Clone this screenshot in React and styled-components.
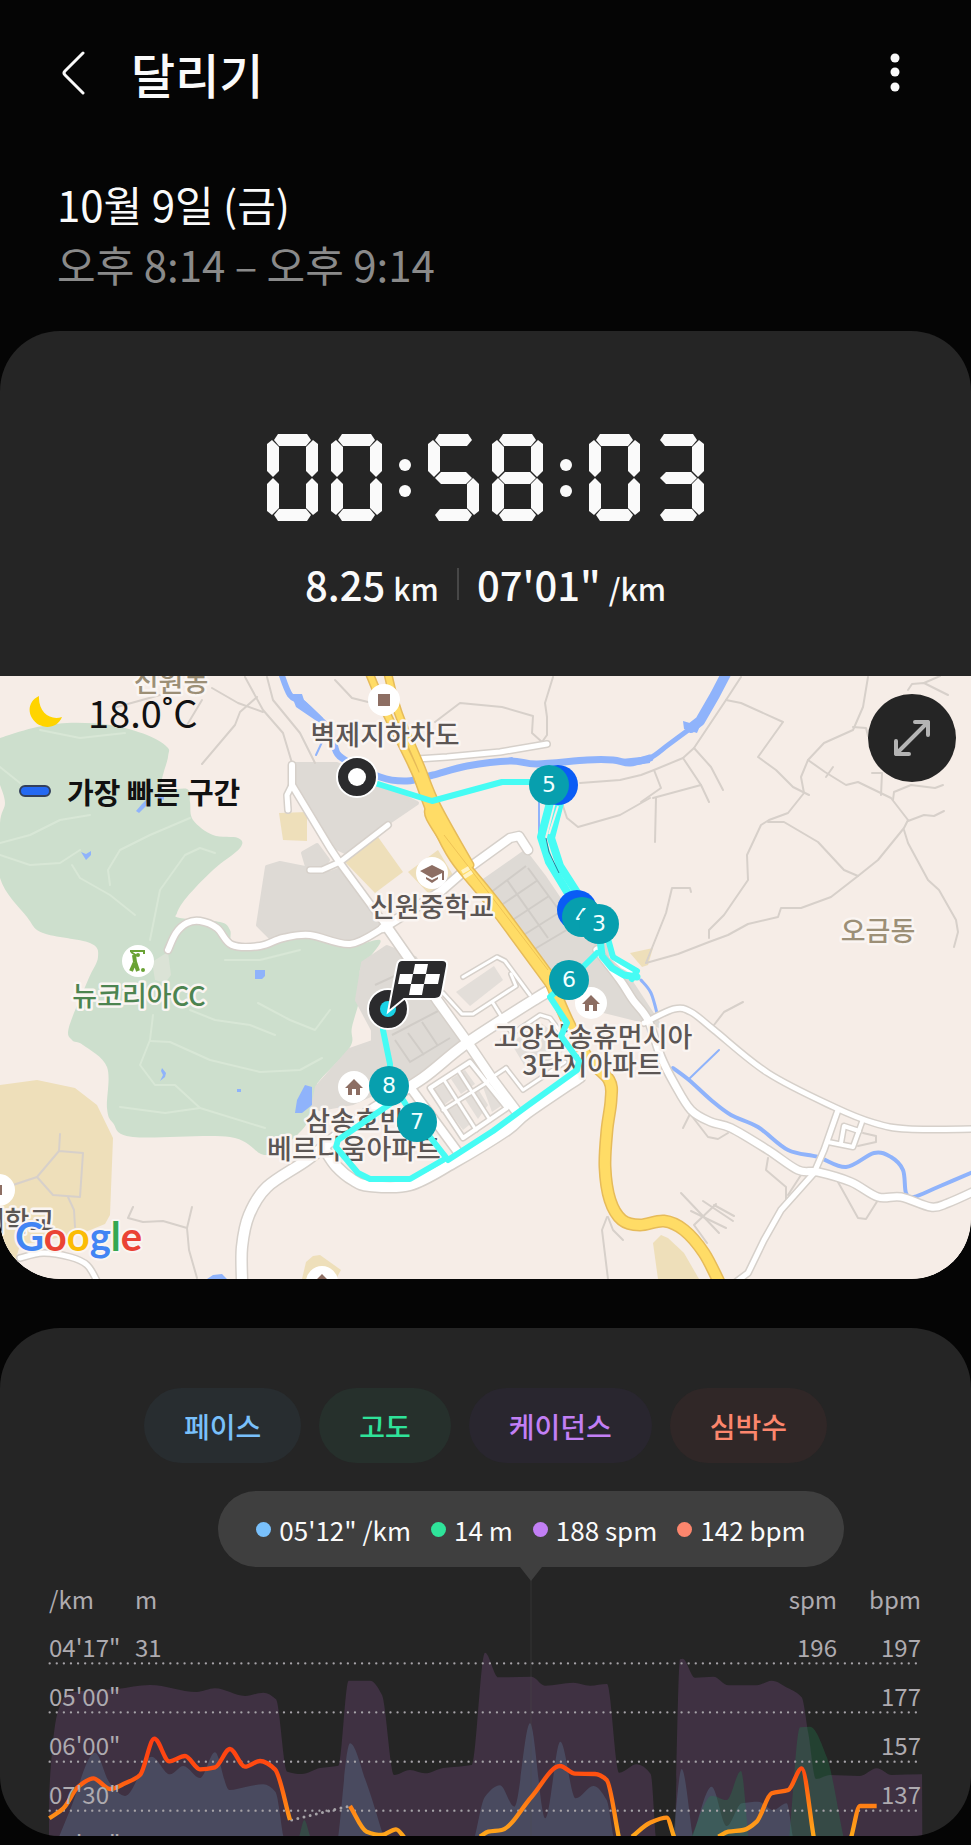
import React from 'react';
import styled, { createGlobalStyle } from 'styled-components';

const GlobalStyle = createGlobalStyle`
  body {
    margin: 0;
    background: #050505;
    color: #fafafa;
    font-family: 'Noto Sans CJK KR', 'Noto Sans', sans-serif;
  }

  button {
    border: 0;
    padding: 0;
    background: none;
    color: inherit;
    font: inherit;
    cursor: pointer;
  }
`;

const Page = styled.main`
  padding-bottom: 9px;
`;

const Header = styled.header`
  display: flex;
  align-items: center;
  height: 146px;
  padding: 0 52px 0 57px;
`;

const IconButton = styled.button`
  display: flex;
  align-items: center;
  justify-content: center;
  width: 48px;
  height: 48px;
`;

const BackButton = styled(IconButton)`
  width: 32px;
`;

const Title = styled.h1`
  flex: 1;
  margin: 0 0 0 42px;
  font-size: 48px;
  line-height: 60px;
  font-weight: 500;
`;

const DateBlock = styled.section`
  padding: 28px 57px 37px;
  font-size: 42px;
  line-height: 60px;
`;

const TimeRange = styled.div`
  color: #8a8a8a;
`;

const SummaryCard = styled.section`
  overflow: hidden;
  border-radius: 60px;
  background: #252525;
`;

const Summary = styled.div`
  display: flex;
  flex-direction: column;
  align-items: center;
  padding: 103px 24px 62px;
`;

const Timer = styled.div`
  display: flex;
  gap: 13px;
`;

const Digit = styled.span`
  display: grid;
  grid-template-columns: 6px 6px 27px 6px 6px;
  grid-template-rows: 6px 6px 26px 5px 1px 6px 25px 6px 6px;
`;

const Segment = styled.span`
  grid-area: ${props => props.$area};
  background: #fafafa;
  clip-path: polygon(${props => props.$shape});
`;

const Colon = styled.span`
  display: flex;
  flex-direction: column;
  justify-content: center;
  gap: 14px;
  margin: 0 4px;
`;

const ColonDot = styled.span`
  width: 12px;
  height: 12px;
  border-radius: 50%;
  background: #fafafa;
`;

const Stats = styled.div`
  display: flex;
  align-items: center;
  gap: 18px;
  margin-top: 33px;
  font-size: 40px;
  line-height: 60px;
  font-weight: 500;
`;

const Unit = styled.span`
  margin-left: 8px;
  font-size: 30px;
  line-height: 30px;
`;

const Divider = styled.span`
  width: 2px;
  height: 32px;
  background: #474747;
`;

const MapBox = styled.div`
  position: relative;
  overflow: hidden;
  border-radius: 0 0 60px 60px;
  background: #f6ede7;
`;

const MapSvg = styled.svg`
  display: block;
  width: 100%;
  height: auto;
`;

const MapInfo = styled.div`
  position: absolute;
  top: 8px;
  left: 19px;
  color: #111;
`;

const Weather = styled.div`
  display: flex;
  align-items: center;
  gap: 25px;
  padding-left: 8px;
  font-size: 38px;
  line-height: 56px;
`;

const Legend = styled.div`
  display: flex;
  align-items: center;
  gap: 16px;
  margin-top: 29px;
  font-size: 29px;
  line-height: 44px;
  font-weight: 700;
`;

const LegendBar = styled.span`
  box-sizing: border-box;
  width: 32px;
  height: 12px;
  border: 2px solid #33405c;
  border-radius: 6px;
  background: #2469f2;
`;

const ExpandButton = styled(IconButton)`
  position: absolute;
  top: 18px;
  right: 15px;
  width: 88px;
  height: 88px;
  border-radius: 50%;
  background: #252525;
`;

const ChartCard = styled.section`
  overflow: hidden;
  margin-top: 49px;
  padding-top: 60px;
  border-radius: 60px;
  background: #252525;
`;

const Chips = styled.div`
  display: flex;
  justify-content: center;
  gap: 18px;
`;

const Chip = styled.button`
  && {
    height: 75px;
    padding: 0 40px;
    border-radius: 38px;
    background: ${props => props.$bg};
    color: ${props => props.$color};
    font-size: 28px;
    font-weight: 500;
    white-space: nowrap;
  }
`;

const TooltipRow = styled.div`
  display: flex;
  justify-content: center;
  padding: 28px 0 0 91px;
`;

const Tooltip = styled.div`
  display: flex;
  align-items: center;
  gap: 20px;
  height: 76px;
  padding: 0 38px;
  border-radius: 38px;
  background: #3f3f3f;
  font-size: 26px;
  white-space: nowrap;
`;

const Reading = styled.span`
  display: flex;
  align-items: center;
  gap: 8px;

  &::before {
    content: '';
    width: 15px;
    height: 15px;
    border-radius: 50%;
    background: ${props => props.$color};
  }
`;

const ChartArea = styled.div`
  display: grid;
  height: 269px;
  overflow: hidden;
`;

const ChartSvg = styled.svg`
  grid-area: 1 / 1;
  display: block;
  width: 100%;
  height: 269px;
`;

const Axes = styled.div`
  grid-area: 1 / 1;
  padding: 8px 50px 0 49px;
  color: #aeabb0;
  font-size: 24px;
`;

const AxisRow = styled.div`
  display: grid;
  grid-template-columns: 86px 1fr 1fr 84px;
  height: 49px;
  line-height: 49px;

  &:first-child {
    height: 47px;
    line-height: 47px;
  }
`;

const AxisText = styled.span`
  text-align: ${props => (props.$end ? 'right' : 'left')};
`;

/* ---------- seven segment timer ---------- */

const SEGMENTS = {
  a: { area: '1 / 2 / 3 / 5', shape: '1px 6px, 5px 0, 34px 0, 38px 6px, 33px 12px, 6px 12px' },
  b: { area: '2 / 4 / 5 / 6', shape: '7px 0, 12px 4px, 12px 31px, 6px 37px, 0 31px, 0 7px' },
  c: { area: '6 / 4 / 9 / 6', shape: '6px 0, 12px 6px, 12px 33px, 7px 37px, 0 30px, 0 6px' },
  d: { area: '8 / 2 / 10 / 5', shape: '6px 0, 33px 0, 38px 6px, 34px 12px, 5px 12px, 1px 6px' },
  e: { area: '6 / 1 / 9 / 3', shape: '6px 0, 12px 6px, 12px 30px, 5px 37px, 0 33px, 0 6px' },
  f: { area: '2 / 1 / 5 / 3', shape: '5px 0, 12px 7px, 12px 31px, 6px 37px, 0 31px, 0 4px' },
  g: { area: '4 / 2 / 7 / 5', shape: '1px 6px, 7px 0, 32px 0, 38px 6px, 32px 12px, 7px 12px' },
};

const LIT = {
  0: 'abcdef',
  1: 'bc',
  2: 'abdeg',
  3: 'abcdg',
  4: 'bcfg',
  5: 'acdfg',
  6: 'acdefg',
  7: 'abc',
  8: 'abcdefg',
  9: 'abcdfg',
};

const SegmentTimer = ({ value }) => (
  <Timer role='timer' aria-label={value}>
    {value.split('').map((char, i) => (
      char === ':' ? (
        <Colon key={i}>
          <ColonDot />
          <ColonDot />
        </Colon>
      ) : (
        <Digit key={i}>
          {LIT[char].split('').map(name => (
            <Segment key={name} $area={SEGMENTS[name].area} $shape={SEGMENTS[name].shape} />
          ))}
        </Digit>
      )
    ))}
  </Timer>
);

/* ---------- path helpers ---------- */

const parse = (str) => str.split(' ').map(pair => pair.split(',').map(Number));

// rounded line through every point
const curve = (str) => {
  const p = parse(str);
  let d = `M${p[0]}`;
  for (let i = 0; i < p.length - 1; i++) {
    const a = p[i - 1] || p[i];
    const b = p[i];
    const c = p[i + 1];
    const e = p[i + 2] || c;
    d += `C${b[0] + (c[0] - a[0]) / 6},${b[1] + (c[1] - a[1]) / 6} ${c[0] - (e[0] - b[0]) / 6},${c[1] - (e[1] - b[1]) / 6} ${c[0]},${c[1]}`;
  }
  return d;
};

// never rises above or falls below its own points
const monotone = (str) => {
  const p = parse(str);
  const slope = p.slice(1).map((q, i) => (q[1] - p[i][1]) / (q[0] - p[i][0] || 1));
  const tangent = p.map((q, i) => {
    if (i === 0) return slope[0];
    if (i === p.length - 1) return slope[i - 1];
    if (slope[i - 1] * slope[i] <= 0) return 0;
    return 2 * slope[i - 1] * slope[i] / (slope[i - 1] + slope[i]);
  });
  let d = `M${p[0]}`;
  for (let i = 0; i < p.length - 1; i++) {
    const h = (p[i + 1][0] - p[i][0]) / 3;
    d += `C${p[i][0] + h},${p[i][1] + tangent[i] * h} ${p[i + 1][0] - h},${p[i + 1][1] - tangent[i + 1] * h} ${p[i + 1]}`;
  }
  return d;
};

/* ---------- map ---------- */

const PARK = '0,738 33,728 67,723 110,725 147,735 167,747 168,757 162,788 187,789 190,802 193,820 213,835 238,838 240,848 213,870 187,897 177,913 180,918 220,922 230,930 233,943 260,947 283,938 310,936 350,945 380,940 370,957 360,970 362,990 352,1027 350,1047 320,1080 317,1087 313,1107 302,1130 267,1155 230,1137 133,1137 113,1123 107,1108 107,1067 83,1045 72,1040 69,1027 88,980 98,957 90,943 43,933 27,917 0,878 0,823 5,803 0,785';

const SAND = [
  '0,1085 37,1080 75,1088 97,1105 113,1138 110,1215 105,1224 83,1233 20,1245 15,1262 0,1250',
  '279,813 307,812 307,841 283,840',
  '345,862 378,837 403,872 375,893',
  '408,872 438,850 456,880 430,895',
  '653,1243 661,1235 668,1238 684,1253 699,1279 658,1279',
  '320,1255 341,1270 336,1279 302,1279 306,1262 313,1256',
  '630,953 653,948 648,965 642,967',
];

const BLOCKS = [
  '295,764 337,764 417,803 345,852 330,845 295,790',
  '267,867 280,863 330,873 343,868 388,928 353,943 300,933 270,937 258,925',
  '303,853 317,845 328,860 322,868 308,870',
  '478,885 525,852 545,878 570,915 610,950 660,1026 640,1020 600,1010 565,985 520,930',
  '363,963 387,947 415,958 462,1040 410,1077 353,1103 320,1109 313,1107 317,1087 350,1050 373,1042 373,1030 357,1000',
];

const BUILDINGS = [
  '434,1090 447,1081 457,1095 444,1105',
  '451,1079 465,1070 475,1084 461,1094',
  '448,1110 460,1101 474,1121 463,1130',
  '465,1099 478,1089 488,1105 478,1119',
  '483,1087 489,1083 501,1106 492,1112',
  '456,992 494,966 503,980 470,1006',
  '511,1043 540,1022 550,1030 565,1050 530,1075',
];

const LANES = [
  '741,677 726,700 694,748 683,758 654,770 641,775 620,780 580,783',
  '726,700 741,703 783,722 758,757 776,770 793,787 809,795',
  '868,677 863,707 853,730 824,743 808,760 801,777 804,793 788,813 769,820 761,825 747,855 748,880 724,915 709,930 709,938',
  '768,822 784,822 818,842 844,870 858,876',
  '646,963 678,954 709,942 728,935 748,924 778,917 781,908 801,908 831,897 858,876 878,860 904,828 908,820 891,798 858,782 846,785 825,772 808,760',
  '904,830 908,843 928,880 939,890 956,920 958,932 954,947',
  '908,821 924,815 934,816 944,811',
  '893,800 894,792 911,785 935,788 943,785',
  '881,795 882,773 872,773',
  '826,777 833,767',
  '853,727 866,728 868,736',
  '694,748 711,767 723,790',
  '683,758 701,785 709,802',
  '654,770 661,788 641,802',
  '653,798 701,785',
  '656,798 655,842',
  '691,892 690,888 672,888 666,913 646,963',
  '908,690 912,684 924,683 948,695',
  '924,683 940,676',
  '245,677 263,710 283,733 292,763',
  '267,677 273,700 300,733 315,763',
  '212,688 238,703 263,712',
  '202,764 235,725 240,712 257,697',
  '202,700 187,725',
  '117,707 160,695',
  '335,680 352,698 368,702',
  '435,722 460,703 502,707 533,716 532,733 542,742 547,735 547,717 545,703 553,677',
  '562,803 567,818 578,827 620,815 650,798',
  '607,1217 602,1230 608,1279',
  '608,1217 613,1230 623,1240',
  '743,1002 724,1012 714,1025',
  '691,1112 683,1128',
  '691,1115 708,1137 718,1139 728,1133',
  '768,1158 766,1170 786,1187 786,1200',
  '801,1175 788,1195',
  '838,1182 858,1218 866,1219 878,1200',
  '681,1193 719,1233',
  '703,1201 733,1221',
  '714,1205 734,1216',
  '691,1211 726,1228',
  '716,1204 694,1225 707,1243',
  '133,1207 128,1218 143,1222 163,1221 187,1228 189,1250 197,1278',
  '192,1207 187,1228',
  '60,1134 59,1151 37,1177 53,1195 80,1197 83,1153 59,1151',
  '37,1177 13,1185 0,1203',
  '68,1197 74,1210 75,1227',
  '863,1133 876,1136 876,1142 858,1146',
];

const TRAILS = [
  '0,767 20,783',
  '0,843 30,835 60,820 90,815',
  '0,855 30,865 60,863 80,850',
  '110,885 108,870 120,850 150,835 190,818',
  '72,865 80,878 110,895 135,915',
  '150,940 160,890 185,855 200,848 215,853',
  '40,730 80,738 125,733',
  '190,1010 215,1020 250,1025 275,1035',
  '153,1015 150,1040 140,1065 155,1085 175,1085 200,1108 265,1128',
  '150,1041 170,1042 210,1060 260,1072 300,1070 322,1058',
  '120,1107 165,1113 200,1108',
  '258,1003 290,1020 315,1030 330,1010',
  '225,960 260,960 300,950',
];

const ROADS = [
  { w: 5, d: '20,1258 43,1253 70,1257 87,1265 97,1281', smooth: true },
  { w: 5, d: '292,785 287,795 288,810' },
  { w: 5, d: '388,825 340,862 322,870 310,870' },
  { w: 6, d: '168,950 176,933 187,923 200,921 217,928 232,945 260,946 283,938 310,935 350,944 383,928', smooth: true },
  { w: 8, d: '383,928 440,892 463,872 510,838 519,836 528,850' },
  { w: 5, d: '547,744 500,752 447,757 417,759' },
  { w: 6, d: '292,765 292,785 330,848 340,863 387,927' },
  { w: 3, d: '463,977 497,957 505,961 530,995' },
  { w: 3, d: '443,993 462,1014 473,1014 516,986 511,974' },
  { w: 3, d: '493,1003 513,1035' },
  { w: 3, d: '503,1040 540,1015 550,1018 562,1034' },
  { w: 3, d: '506,1068 523,1090 565,1062' },
  { w: 3, d: '488,1080 506,1068' },
  { w: 4, d: '493,905 535,965' },
  { w: 4, d: '430,1088 470,1062 507,1108 463,1138 430,1088' },
  { w: 3, d: '443,1110 488,1082' },
  { w: 3, d: '444,1080 476,1130' },
  { w: 3, d: '458,1070 490,1120' },
  { w: 9, d: '387,927 410,960 437,1000 468,1043 493,1080 517,1112' },
  { w: 8, d: '410,1087 460,1155' },
  { w: 10, d: '242,1281 242,1247 249,1215 267,1187 307,1160 338,1135 375,1108 423,1078 467,1043 537,998 560,985', smooth: true },
  { w: 10, d: '325,1150 336,1166 353,1180 370,1186 410,1185 453,1163 507,1130 527,1113 580,1077', smooth: true },
  { w: 5, d: '644,1023 674,1009 691,1012 714,1030 768,1073 834,1107 874,1123 908,1129 975,1129', smooth: true },
  { w: 5, d: '838,1110 824,1150 814,1173 781,1210 764,1240 748,1273 736,1282' },
  { w: 4, d: '862,1122 853,1147 828,1142' },
  { w: 4, d: '841,1143 844,1126 859,1131' },
  { w: 7, d: '597,950 620,980 633,1000 648,1020 661,1057 674,1083 691,1110 711,1122 731,1128 768,1150 798,1170 818,1172 851,1182 878,1197 901,1197 931,1207 948,1203 975,1191', smooth: true },
];

const HIGHWAYS = [
  { w: 6, d: '368,670 385,710 412,765 428,803 430,818 455,857', smooth: true },
  { w: 6, d: '387,670 398,712 420,765 437,806 470,865', smooth: true },
  { w: 12, d: '421,778 436,818 456,857 493,903 555,987', smooth: true },
  { w: 10, d: '550,980 567,1020 587,1057 609,1080 611,1100 607,1130 605,1167 610,1200 622,1220 640,1225 664,1221 684,1230 704,1253 720,1284', smooth: true },
];

const RIVERS = [
  { w: 6, d: '280,670 290,695 303,703 323,722', smooth: true },
  { w: 7, d: '326,725 334,745 342,758 380,777 407,781 433,775 467,766 510,761 537,764 587,760 613,760 630,763 650,758', smooth: true },
  { w: 5, d: '630,763 650,758 668,745 691,728', smooth: true },
  { w: 10, d: '691,728 700,721 715,695 727,672' },
  { w: 3, d: '641,980 651,993 658,1017', smooth: true },
  { w: 4, d: '673,1068 689,1080 711,1100 731,1115 758,1127 788,1150 818,1157 846,1167 874,1153 891,1157 903,1170 906,1193 914,1197 938,1187 973,1172', smooth: true },
  { w: 2, d: '690,1078 719,1050' },
  { w: 2, d: '539,800 539,835' },
  { w: 2, d: '323,740 316,755' },
];

const ROUTE = [
  { w: 6, d: '357,777 378,784 432,801 502,782 530,782 549,785' },
  { w: 8, d: '552,795 541,837 549,862 572,900 600,935' },
  { w: 8, d: '562,795 551,838 560,866 585,905' },
  { w: 7, d: '599,930 602,956 612,968 624,975 637,977' },
  { w: 6, d: '607,935 613,957 637,971 632,979' },
  { w: 6, d: '597,953 583,967 569,980 550,997 567,1023 561,1036 579,1061 577,1070 527,1106 493,1131 448,1160 430,1137 417,1122 403,1100' },
  { w: 6, d: '443,1160 410,1179 370,1179 358,1173 336,1147 338,1140 390,1104' },
  { w: 6, d: '383,1009 383,1030 390,1064 389,1086' },
];

const LABELS = [
  { x: 171, y: 692, text: '신원동', color: '#9c8f76' },
  { x: 385, y: 745, text: '벽제지하차도' },
  { x: 432, y: 917, text: '신원중학교' },
  { x: 878, y: 941, text: '오금동', color: '#9c8f76' },
  { x: 139, y: 1006, text: '뉴코리아CC', color: '#4d8450' },
  { x: 593, y: 1047, text: '고양삼송휴먼시아' },
  { x: 592, y: 1075, text: '3단지아파트' },
  { x: 355, y: 1131, text: '삼송호반' },
  { x: 354, y: 1159, text: '베르디움아파트' },
  { x: 17, y: 1231, text: '대학교' },
];

const MARKERS = [
  { x: 558, y: 785 },
  { x: 549, y: 785, km: 5 },
  { x: 577, y: 910 },
  { x: 582, y: 917, km: 4 },
  { x: 599, y: 924, km: 3 },
  { x: 569, y: 980, km: 6 },
  { x: 389, y: 1086, km: 8 },
  { x: 417, y: 1122, km: 7 },
];

const Stroke = ({ lines, color, extra = 0 }) => (
  <g fill='none' stroke={color} strokeLinecap='round' strokeLinejoin='round'>
    {lines.map(line => (
      <path key={line.d} d={line.smooth ? curve(line.d) : `M${line.d}`} strokeWidth={line.w + extra} />
    ))}
  </g>
);

const Poi = ({ x, y, children }) => (
  <g transform={`translate(${x} ${y})`} fill='#8d6e63'>
    <circle r='16' fill='#fff' />
    {children}
  </g>
);

const House = () => <path d='M0 -8 L9 1 H6 V8 H2 V2 H-2 V8 H-6 V1 H-9 Z' />;

const RouteMap = () => (
  <MapSvg viewBox='0 676 971 603' role='img' aria-label='달리기 경로'>
    <rect x='0' y='676' width='971' height='603' fill='#f6ede7' />
    <path d={`${curve(PARK)}Z`} fill='#cddfcd' />
    {SAND.map(points => <polygon key={points} points={points} fill='#eedfba' />)}
    {BLOCKS.map(points => (
      <polygon key={points} points={points} fill='#dedad5' stroke='#dedad5' strokeWidth='4' strokeLinejoin='round' />
    ))}
    {BUILDINGS.map(points => <polygon key={points} points={points} fill='#e3ded9' />)}
    <polygon points='163,955 168,952 171,975 165,983 155,980 152,962' fill='#dbe3d6' />
    <g stroke='#d0ccc7' strokeWidth='2' fill='none'>
      <path d='M490 893 L526 866 M500 906 L538 880 M511 921 L549 896 M522 936 L560 912 M533 950 L570 928 M507 880 L548 938 M528 868 L570 925 M375 985 L412 968 M368 1012 L425 985 M392 1035 L440 1010 M395 1040 L410 1062 L450 1038 M408 1033 L424 1055 M422 1022 L438 1046' />
    </g>
    <g fill='#8fb3fb'>
      <polygon points='295,1113 297,1100 305,1085 312,1087 312,1105 302,1113' />
      <path d='M81 852 L86 854 L91 851 L91 855 L86 860 Z M255 970 H265 V976 L262 979 H255 Z M162 1068 L166 1073 L165 1077 L160 1081 L163 1075 L161 1071 Z M237 1089 H241 V1092 H237 Z M207 1279 L213 1275 L222 1274 L227 1279 Z' />
      <path d='M136 811 L142 804 L147 799 L146 806 L139 813 Z M158 793 L164 795 L164 800 L158 798 Z M291 694 L302 694 L304 700 L323 718 L318 722 L296 707 Z M683 721 L700 726 L697 733 L684 729 Z M612 760 L650 756 L650 763 L630 766 Z M480 765 L512 757 L520 763 Z' />
    </g>
    <Stroke lines={TRAILS.map(d => ({ d, w: 2 }))} color='#d8e7d6' />
    <Stroke lines={LANES.map(d => ({ d, w: 2 }))} color='#d7d0ca' />
    <Stroke lines={RIVERS} color='#8fb3fb' />
    <Stroke lines={ROADS} color='#d6d0ca' extra={3} />
    <Stroke lines={ROADS} color='#fff' />
    <Stroke lines={HIGHWAYS} color='#e6bb5a' extra={3} />
    <Stroke lines={HIGHWAYS} color='#ffdc66' />
    <path d='M444 835 L498 905 L548 970' stroke='#efc355' strokeWidth='1' fill='none' />
    <path d='M462 872 L469 868 M464 877 L472 872' stroke='#fff3c4' strokeWidth='4' />

    <Poi x={384} y={700}><rect x='-6' y='-6' width='12' height='12' /></Poi>
    <Poi x={432} y={873}>
      <path d='M-12 -2 L0 -8 L12 -2 V7 H10 V0 L0 5 Z M-6 4 L0 7 L6 4 V6 L0 10 L-6 6 Z' />
    </Poi>
    <Poi x={591} y={1003}><House /></Poi>
    <Poi x={354} y={1087}><House /></Poi>
    <Poi x={322} y={1282}><House /></Poi>
    <Poi x={-1} y={1190}><path d='M0 -5 H3 V5 H1 V-2 H0 Z' /></Poi>
    <Poi x={138} y={961}>
      <g stroke='#6aa234' fill='none' strokeWidth='2'>
        <path d='M-8 -10 H6 V-7 M-7 -9 L-1 -5' />
        <path d='M-4 -6 L-3 1 M-3 1 L-7 10 M-3 1 L0 10' strokeWidth='4' />
      </g>
      <circle cx='0' cy='-6' r='2' fill='#6aa234' />
      <circle cx='5' cy='9' r='2' fill='#6aa234' />
    </Poi>

    <g
      fontSize='27'
      fontWeight='500'
      textAnchor='middle'
      stroke='#faf5f2'
      strokeWidth='5'
      strokeLinejoin='round'
      paintOrder='stroke'
    >
      {LABELS.map(label => (
        <text key={label.text} x={label.x} y={label.y} fill={label.color || '#5c5654'}>{label.text}</text>
      ))}
    </g>

    <Stroke lines={[{ w: 3, d: '611,957 622,967 634,973' }]} color='#fff' />
    <Stroke lines={ROUTE} color='#46fcf4' />
    <path d='M558 806 L549 834' stroke='#f6ede7' strokeWidth='2' />
    <path d='M546 838 L549 852 L559 873' stroke='#2b7f9b' strokeWidth='1' fill='none' />

    {MARKERS.map(({ x, y, km }) => (
      <g key={`${x}-${y}`}>
        <circle cx={x} cy={y} r='20' fill={km ? '#079fae' : '#0a5cf5'} />
        {km && (
          <text x={x} y={y + 7} fill='#f2ffff' fontSize='22' textAnchor='middle' fontFamily='DejaVu Sans'>{km}</text>
        )}
      </g>
    ))}

    <circle cx='357' cy='777' r='20' fill='#2b2b2d' stroke='#fff' strokeWidth='2' />
    <circle cx='357' cy='777' r='9' fill='#fff' />
    <circle cx='388' cy='1009' r='20' fill='#2b2b2d' stroke='#fff' strokeWidth='2' />
    <circle cx='388' cy='1009' r='8' fill='#19d3e6' />
    <path d='M402 960 H442 Q448 960 447 966 L442 993 Q441 999 435 999 H404 L388 1012 L397 965 Q398 960 402 960 Z' fill='#2b2b2d' stroke='#fff' strokeWidth='2' />
    <path d='M415 964 H428 L426 974 H413 Z M400 974 H413 L411 984 H398 Z M426 974 H440 L438 984 H424 Z M411 984 H424 L422 995 H409 Z' fill='#fff' />

    <text
      x='15'
      y='1251'
      fontFamily='Lato'
      fontSize='40'
      fontWeight='700'
      stroke='#faf5f2'
      strokeWidth='4'
      strokeLinejoin='round'
      paintOrder='stroke'
    >
      <tspan fill='#4285f4'>G</tspan>
      <tspan fill='#ea4335'>o</tspan>
      <tspan fill='#fbbc05'>o</tspan>
      <tspan fill='#4285f4'>g</tspan>
      <tspan fill='#34a853'>l</tspan>
      <tspan fill='#ea4335'>e</tspan>
    </text>
  </MapSvg>
);

/* ---------- chart, in thirds of a pixel ---------- */

const CADENCE = [
  '147,798 148,660 175,420 205,368 350,357 450,345 590,366 645,355 735,378 790,368 828,388 862,605 905,612 960,594 1015,587 1046,332 1110,332 1146,375 1182,615 1230,600 1275,610 1330,594 1415,585 1455,248 1495,322 1595,320 1635,347 1720,338 1770,347 1821,342 1858,608 1910,583 1952,612 1967,798',
  '2025,798 2040,268 2048,266 2085,323 2140,320 2185,346 2270,346 2315,332 2365,355 2405,382 2425,490 2448,627 2490,615 2580,618 2630,595 2675,615 2766,613 2767,798',
];

const PACE = [
  '178,798 210,720 285,548 330,640 375,678 455,560 510,613 550,588 600,624 645,547 688,660 740,650 790,643 826,665 850,798',
  '1015,798 1050,520 1100,640 1150,798',
  '1425,798 1455,680 1500,646 1543,710 1590,460 1636,745 1681,515 1727,685 1780,648 1820,690 1840,798',
  '2020,798 2045,597 2078,798',
  '2078,798 2135,650 2180,768 2225,700 2275,695 2320,720 2360,700 2378,798',
];

const ELEVATION = [
  '898,798 913,750 930,798',
  '2075,798 2135,677 2180,690 2223,603 2245,798',
  '2368,798 2400,472 2430,470 2480,560 2530,798',
];

const HEART_RATE = [
  '148,745 190,715 235,650 280,625 330,657 375,640 420,615 463,506 508,574 555,558 600,598 645,592 690,537 735,590 780,573 825,598 870,750',
  '1050,708 1100,785 1145,795 1188,778 1215,805',
  '1440,800 1465,785 1505,780 1595,680 1680,588 1725,611 1785,612 1820,630 1856,800',
  '1896,800 1950,758 2000,743 2022,800',
  '2155,800 2185,785 2230,780 2270,755 2315,670 2365,660 2405,595 2441,800',
  '2554,800 2580,708 2630,708',
];

const AXIS_ROWS = [
  ['/km', 'm', 'spm', 'bpm'],
  ['04\'17"', '31', '196', '197'],
  ['05\'00"', '', '', '177'],
  ['06\'00"', '', '', '157'],
  ['07\'30"', '', '', '137'],
  ['10\'00"', '', '', '117'],
];

const RunChart = () => (
  <ChartArea>
    <ChartSvg viewBox='0 -9 2913 807' preserveAspectRatio='none' aria-hidden='true'>
      <defs>
        <linearGradient id='effort' gradientUnits='userSpaceOnUse' x1='0' y1='500' x2='0' y2='800'>
          <stop offset='0' stopColor='#ff3d12' />
          <stop offset='0.35' stopColor='#ff4d10' />
          <stop offset='0.6' stopColor='#ff7412' />
          <stop offset='1' stopColor='#ffa91c' />
        </linearGradient>
      </defs>
      {CADENCE.map(d => <path key={d} d={monotone(d)} fill='#3f3142' />)}
      {PACE.map(d => <path key={d} d={monotone(d)} fill='rgba(97, 132, 162, 0.3)' />)}
      {ELEVATION.map(d => <path key={d} d={monotone(d)} fill='rgba(33, 133, 80, 0.3)' />)}
      <path d='M1593 20 V798' stroke='#4a4a4a' strokeOpacity='0.4' strokeWidth='3' />
      <path d='M1560 -9 H1626 L1593 33 Z' fill='#3f3f3f' />
      {[280, 427, 575, 722].map(y => (
        <path
          key={y}
          d={`M149 ${y} H2768`}
          stroke='#a6a3a8'
          strokeWidth='7'
          strokeLinecap='round'
          strokeDasharray='0 21.3'
        />
      ))}
      <path d='M875 750 L1045 709' stroke='#a6a3a8' strokeWidth='9' strokeLinecap='round' strokeDasharray='0 19' />
      {HEART_RATE.map(d => (
        <path key={d} d={monotone(d)} fill='none' stroke='url(#effort)' strokeWidth='13' />
      ))}
    </ChartSvg>
    <Axes>
      {AXIS_ROWS.map(row => (
        <AxisRow key={row[0]}>
          {row.map((text, i) => <AxisText key={i} $end={i > 1}>{text}</AxisText>)}
        </AxisRow>
      ))}
    </Axes>
  </ChartArea>
);

const METRICS = [
  { label: '페이스', value: '05\'12" /km', color: '#79c0fb', bg: '#282d30' },
  { label: '고도', value: '14 m', color: '#2fe39a', bg: '#26302c' },
  { label: '케이던스', value: '188 spm', color: '#c27ff5', bg: '#29262f' },
  { label: '심박수', value: '142 bpm', color: '#fc866d', bg: '#302727' },
];

const App = () => (
  <Page>
    <GlobalStyle />
    <Header>
      <BackButton aria-label='뒤로'>
        <svg width='24' height='46' viewBox='0 0 24 46' fill='none' stroke='#fafafa' strokeWidth='3' strokeLinecap='round' strokeLinejoin='round'>
          <path d='M22 3 L4 21 Q2 23 4 25 L22 43' />
        </svg>
      </BackButton>
      <Title>달리기</Title>
      <IconButton aria-label='더보기'>
        <svg width='10' height='40' viewBox='0 0 10 40' fill='#fafafa'>
          <circle cx='5' cy='5' r='4.5' />
          <circle cx='5' cy='19' r='4.5' />
          <circle cx='5' cy='34' r='4.5' />
        </svg>
      </IconButton>
    </Header>
    <DateBlock>
      <div>10월 9일 (금)</div>
      <TimeRange>오후 8:14 – 오후 9:14</TimeRange>
    </DateBlock>
    <SummaryCard>
      <Summary>
        <SegmentTimer value='00:58:03' />
        <Stats>
          <span>8.25<Unit>km</Unit></span>
          <Divider />
          <span>07'01"<Unit>/km</Unit></span>
        </Stats>
      </Summary>
      <MapBox>
        <RouteMap />
        <MapInfo>
          <Weather>
            <svg width='36' height='34' viewBox='0 0 36 34' fill='#ffd400'>
              <path d='M12 1 C3 5 0 15 5 23 C12 35 30 35 35 22 C24 26 11 18 12 1 Z' />
            </svg>
            18.0˚C
          </Weather>
          <Legend>
            <LegendBar />
            가장 빠른 구간
          </Legend>
        </MapInfo>
        <ExpandButton aria-label='지도 확대'>
          <svg width='36' height='36' viewBox='0 0 36 36' fill='none' stroke='#b4b4b4' strokeWidth='4' strokeLinecap='round' strokeLinejoin='round'>
            <path d='M2 34 L34 2 M21 2 H34 V15 M2 21 V34 H15' />
          </svg>
        </ExpandButton>
      </MapBox>
    </SummaryCard>
    <ChartCard>
      <Chips>
        {METRICS.map(m => <Chip key={m.label} $bg={m.bg} $color={m.color}>{m.label}</Chip>)}
      </Chips>
      <TooltipRow>
        <Tooltip>
          {METRICS.map(m => <Reading key={m.label} $color={m.color}>{m.value}</Reading>)}
        </Tooltip>
      </TooltipRow>
      <RunChart />
    </ChartCard>
  </Page>
);

export default App;
